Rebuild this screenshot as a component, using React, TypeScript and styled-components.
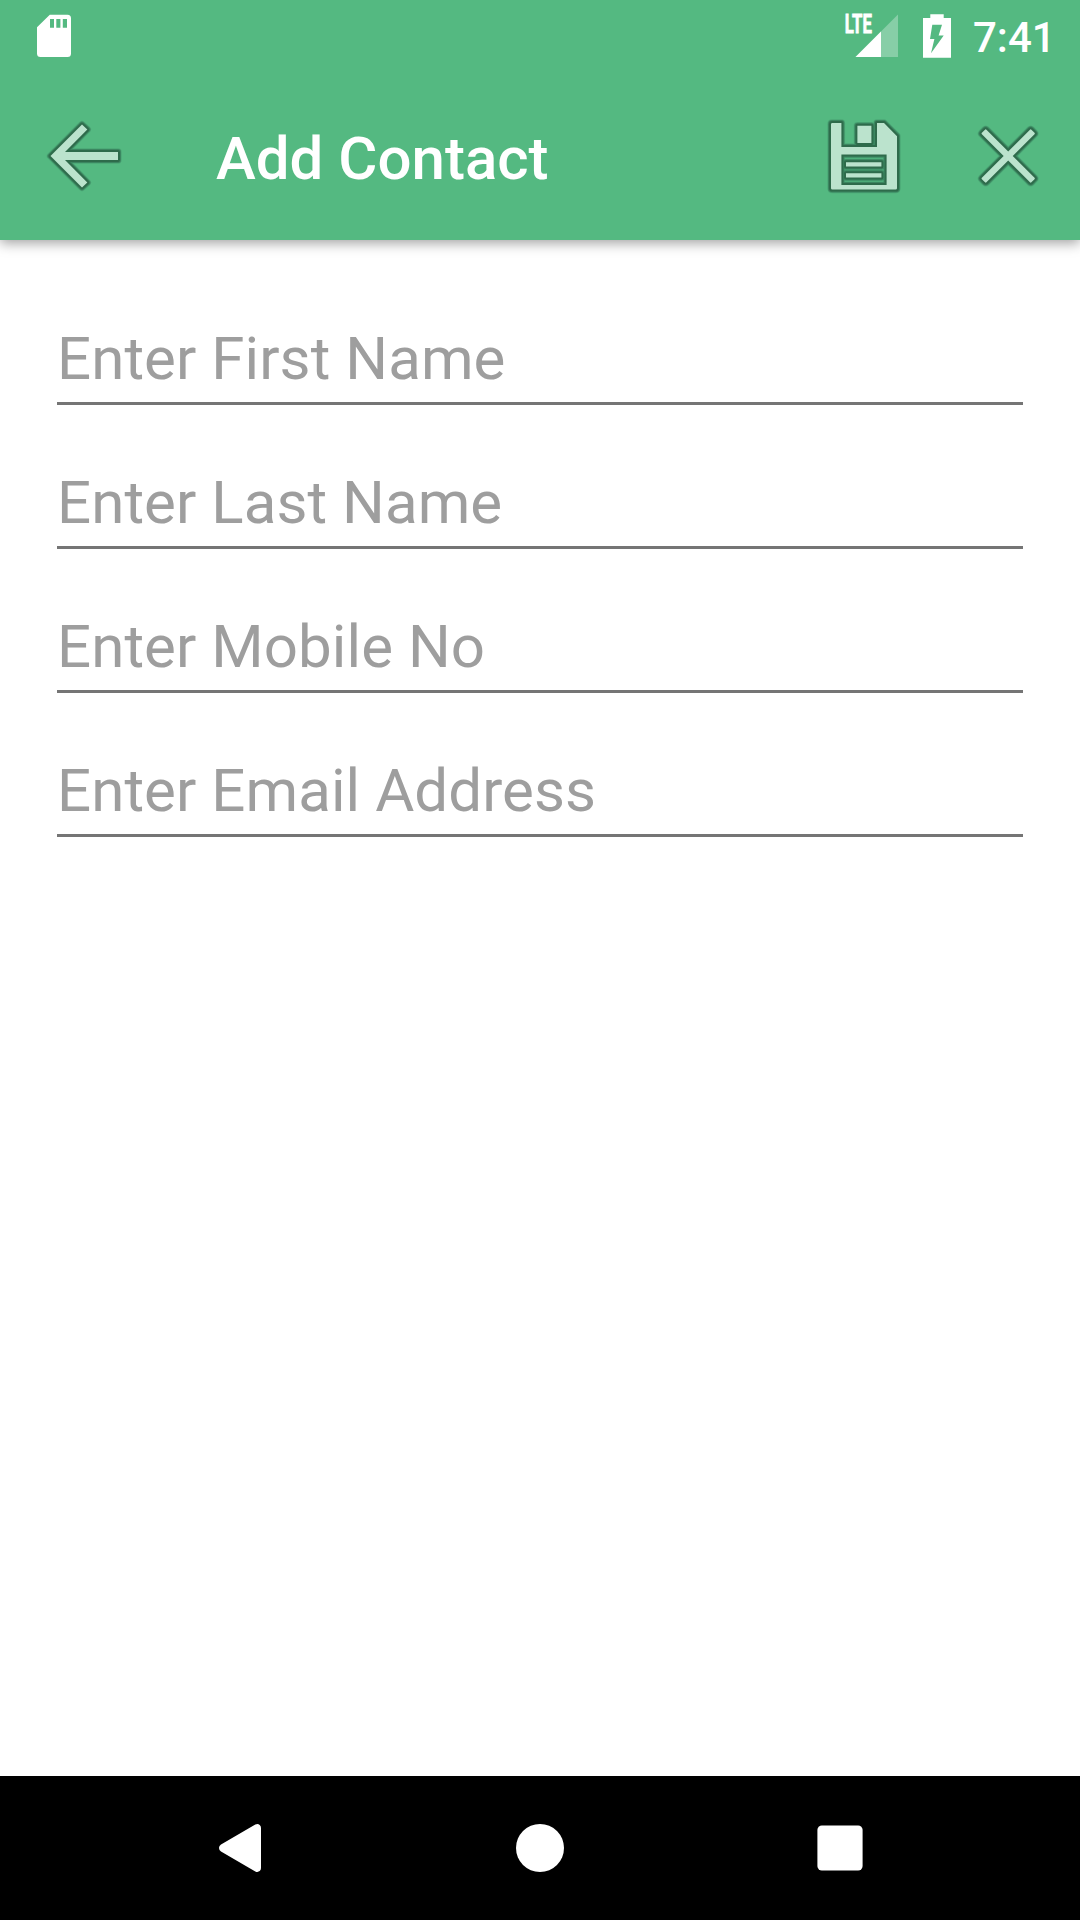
import React from "react";
import styled, { createGlobalStyle } from "styled-components";

const GlobalStyle = createGlobalStyle`
  * { box-sizing: border-box; }
  body { margin: 0; background: #fff; }
`;

const Screen = styled.div`
  display: flex;
  flex-direction: column;
  width: 1080px;
  height: 1920px;
  background: #fff;
  font-family: Roboto, sans-serif;
  overflow: hidden;
`;

const Header = styled.header`
  display: flex;
  flex-direction: column;
  background: #54b981;
  box-shadow: 0 3px 12px rgba(0, 0, 0, 0.38);
`;

const StatusBar = styled.div`
  display: flex;
  align-items: center;
  height: 72px;
  padding: 0 30px 0 30px;
`;

const Spacer = styled.div`
  flex: 1;
`;

const Clock = styled.span`
  width: 77px;
  margin-left: 13px;
  padding-top: 3px;
  color: #fff;
  font-size: 42px;
  font-weight: 500;
  line-height: 70px;
  white-space: nowrap;
`;

const Toolbar = styled.div`
  display: flex;
  align-items: center;
  height: 168px;
  padding: 0 24px 0 36px;
`;

const Title = styled.h1`
  flex: 1;
  margin: 0 0 0 84px;
  padding-top: 5px;
  color: #fff;
  font-size: 60px;
  font-weight: 500;
  line-height: 72px;
  white-space: nowrap;
`;

const IconButton = styled.button<{ $gap?: number }>`
  display: block;
  width: 96px;
  height: 96px;
  margin: 0 0 0 ${(p) => p.$gap ?? 0}px;
  padding: 0;
  border: 0;
  background: none;
`;

const Icon = styled.svg`
  display: block;
  flex: none;
  overflow: visible;
`;

const Form = styled.form`
  display: flex;
  flex: 1;
  flex-direction: column;
  padding: 21px 57px 0;
`;

const Field = styled.input`
  width: 100%;
  height: 144px;
  padding: 61px 0 8px;
  border: 0;
  border-bottom: 3px solid #757575;
  outline: 0;
  background: none;
  color: #222;
  font-family: inherit;
  font-size: 60px;
  letter-spacing: 0.07px;
  line-height: 72px;
  &::placeholder {
    color: #9e9e9e;
    opacity: 1;
  }
`;

const NavBar = styled.nav`
  display: flex;
  align-items: center;
  justify-content: center;
  gap: 252px;
  height: 144px;
  background: #000;
`;

/* A pale glyph with a dark rim around every edge and a faint halo outside it. */
const Rimmed = ({ d, transform }: { d: string; transform?: string }) => (
  <g transform={transform} strokeLinejoin="round" fillRule="evenodd">
    <path d={d} fill="none" stroke="#3b8660" strokeOpacity="0.35" strokeWidth="7.4" />
    <path d={d} fill="none" stroke="#3b8660" strokeWidth="6" />
    <path d={d} fill="none" stroke="#2e6b4b" strokeWidth="4" />
    <path d={d} fill="#bbe3cd" />
  </g>
);

const SdCard = () => (
  <Icon width="48" height="48" viewBox="30 12 48 48">
    <path
      fill="#fff"
      fillRule="evenodd"
      d="M49.8 14.7H67.5Q71 14.7 71 18.2V53.5Q71 57 67.5 57H40.5Q37 57 37 53.5V27.3ZM50 19V27.7H54V19ZM56.3 19V27.7H60.4V19ZM62.8 19V27.7H67V19Z"
    />
  </Icon>
);

const Signal = () => (
  <Icon width="60" height="48" viewBox="842 12 60 48">
    <path d="M898 14.5V57H855.5Z" fill="#fff" opacity="0.3" />
    <path d="M881 31.5V57H855.5Z" fill="#fff" />
    <text
      x="844.8"
      y="33.4"
      fill="#fff"
      stroke="#fff"
      strokeWidth="0.8"
      fontFamily="Roboto, sans-serif"
      fontSize="25.5"
      fontWeight="700"
      textLength="27"
      lengthAdjust="spacingAndGlyphs"
    >
      LTE
    </text>
  </Icon>
);

const Battery = () => (
  <Icon width="58" height="48" viewBox="902 12 58 48">
    <path
      fill="#fff"
      fillRule="evenodd"
      d="M930.3 14.3H943.7V18H951V57.7H923V18H930.3ZM932.3 24.7L930 39H934.4L931 53.3L943.7 35.4H938.6L942 24.7Z"
    />
  </Icon>
);

const fields = ["Enter First Name", "Enter Last Name", "Enter Mobile No", "Enter Email Address"];

export default function App() {
  return (
    <Screen>
      <GlobalStyle />
      <Header>
        <StatusBar>
          <SdCard />
          <Spacer />
          <Signal />
          <Battery />
          <Clock>7:41</Clock>
        </StatusBar>
        <Toolbar>
          <IconButton aria-label="Back">
            <Icon width="96" height="96" viewBox="36 108 96 96">
              <Rimmed d="M50.5 156L82 124.6L87.3 129.5L65 152H118V160H65L87.3 182.5L82 187.4Z" />
            </Icon>
          </IconButton>
          <Title>Add Contact</Title>
          <IconButton aria-label="Save">
            <Icon width="96" height="96" viewBox="816 108 96 96">
              <Rimmed d="M832.2 123H841.4V147H877V123H884L897 136.2V188.2Q897 189.6 895.6 189.6H832.4Q831 189.6 831 188.2V124.4Q831 123 832.2 123ZM841.4 154.4V185H886.6V154.4ZM857.4 125.8H871.4V143H857.4ZM846 162.3H881.4V166.4H846ZM846 173.3H881.4V177.4H846Z" />
            </Icon>
          </IconButton>
          <IconButton $gap={48} aria-label="Close">
            <Icon width="96" height="96" viewBox="960 108 96 96">
              <Rimmed
                transform="translate(1008.2 156) rotate(45)"
                d="M-34 -3.2H-3.2V-34Q-3.2 -35 -2.2 -35H2.2Q3.2 -35 3.2 -34V-3.2H34Q35 -3.2 35 -2.2V2.2Q35 3.2 34 3.2H3.2V34Q3.2 35 2.2 35H-2.2Q-3.2 35 -3.2 34V3.2H-34Q-35 3.2 -35 2.2V-2.2Q-35 -3.2 -34 -3.2Z"
              />
            </Icon>
          </IconButton>
        </Toolbar>
      </Header>
      <Form>
        {fields.map((label) => (
          <Field key={label} placeholder={label} />
        ))}
      </Form>
      <NavBar>
        <Icon width="48" height="48" viewBox="216 1824 48 48">
          <path
            fill="#fff"
            d="M255.3 1824.6Q257.8 1823.4 259.7 1824.9Q261 1825.8 261 1828V1868Q261 1870.2 259.7 1871.1Q257.8 1872.6 255.3 1871.4L221 1851.5Q219 1850.2 219 1848Q219 1845.8 221 1844.5Z"
          />
        </Icon>
        <Icon width="48" height="48" viewBox="0 0 48 48">
          <circle cx="24" cy="24" r="24" fill="#fff" />
        </Icon>
        <Icon width="48" height="48" viewBox="0 0 48 48">
          <rect x="1.4" y="1.4" width="45.2" height="45.2" rx="4.5" fill="#fff" />
        </Icon>
      </NavBar>
    </Screen>
  );
}
